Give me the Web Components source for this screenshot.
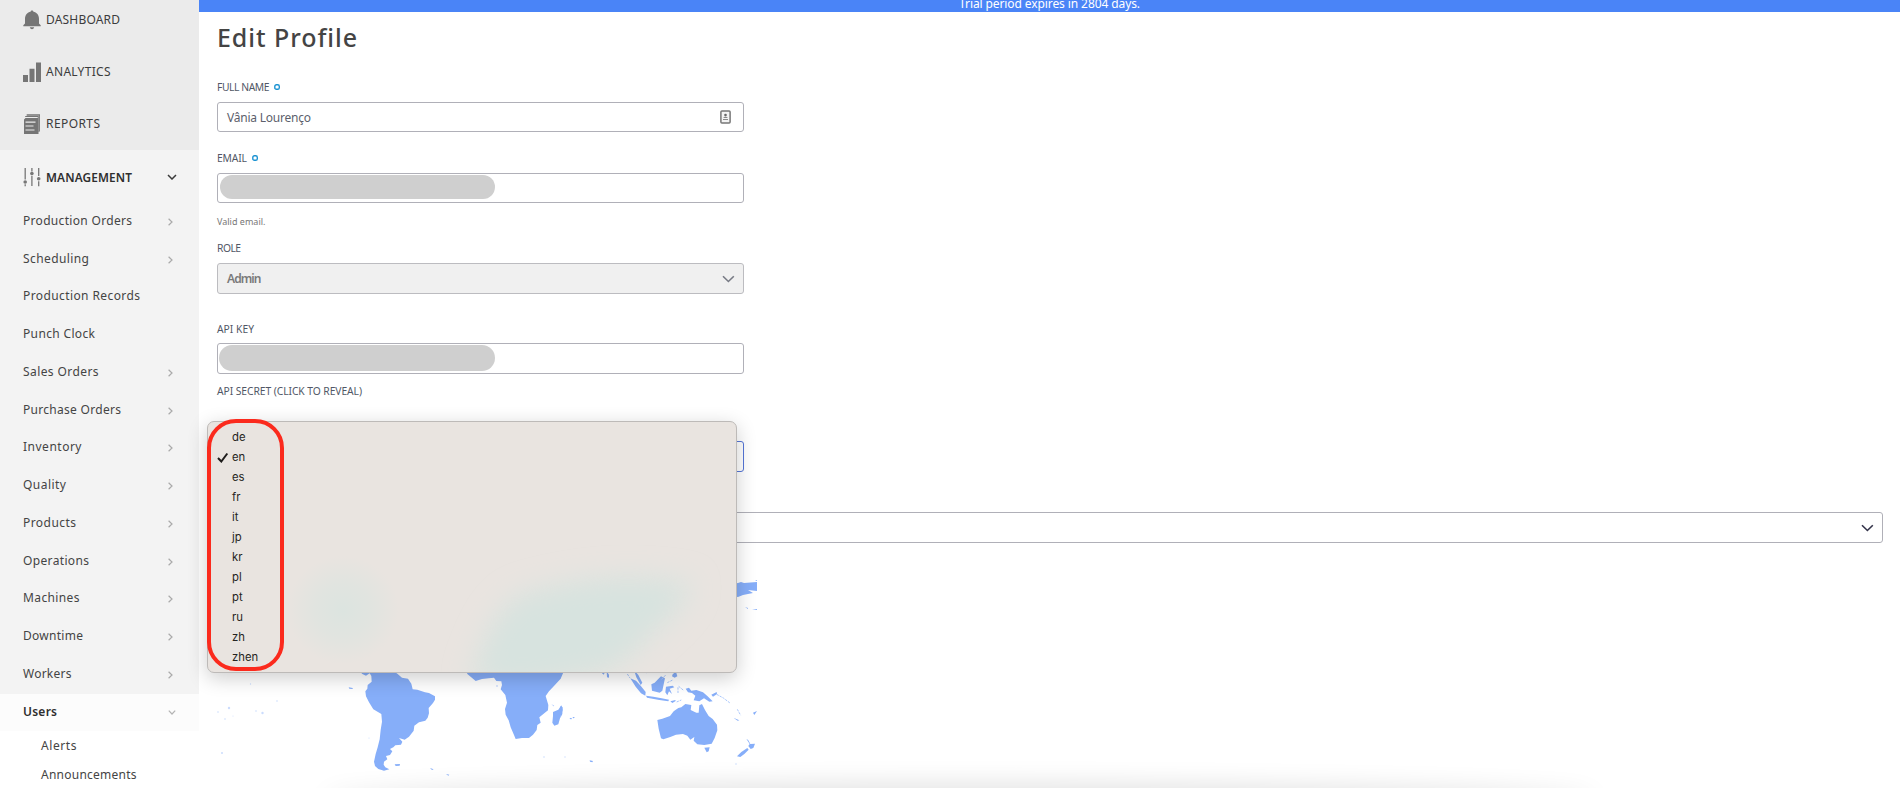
<!DOCTYPE html>
<html lang="en">
<head>
<meta charset="utf-8">
<title>Edit Profile</title>
<style>
html,body{margin:0;height:100%;overflow:hidden;background:#fff;font-family:"Noto Sans",sans-serif}
</style>
</head>
<body>
<profile-app></profile-app>
<script>
const define=(name,html,setup)=>customElements.define(name,class extends HTMLElement{
  connectedCallback(){
    if(this.shadowRoot)return;
    const t=document.createElement('template');
    t.innerHTML=typeof html==='function'?html(this):html;
    this.attachShadow({mode:'open'}).append(t.content.cloneNode(true));
    if(setup)setup(this,this.shadowRoot);
  }
});

/* Text run tracked out to a fixed measure given by its "w" attribute. */
define('ui-text',`<style>:host{display:inline-block;white-space:nowrap}span{display:inline-block}</style><span><slot></slot></span>`,(el,root)=>{
  const s=root.querySelector('span'),w=+el.getAttribute('w');
  if(!w)return;
  const n=el.textContent.length;
  s.style.letterSpacing=((w-s.getBoundingClientRect().width)/(n-1))+'px';
});

const icons={
  bell:`<svg width="18" height="20" viewBox="0 0 18 20"><path fill="#757575" d="M9 .5c.8 0 1.4.5 1.4 1.3C13.600 2.500 16 5 16 9v4.500l1.700 1.700v1H.3v-1L2 13.500V9c0-4 2.400-6.500 5.600-7.200C7.600 1 8.200.5 9 .5zM6.800 17.300h4.400c-.3 1.300-1.200 2-2.200 2s-1.900-.7-2.200-2z"/></svg>`,
  bars:`<svg width="18" height="20" viewBox="0 0 18 20"><path fill="#757575" d="M0 13h5v7H0zM6.500 6.800h5V20h-5zM13 .5h5V20h-5z"/></svg>`,
  report:`<svg width="18" height="20" viewBox="0 0 18 20"><path fill="#b0b0b0" d="M3.500 0H17v18h-1.500V2H3.500z"/><path fill="#757575" d="M4 .5h13V17h-.8V1.400H4zM2.200 2h13.500v16h-1V3H2.200zM2.500 4H15.500v16H1V5.500z"/><path stroke="#ebebeb" stroke-width="1.200" d="M2.500 8.200h10M2.500 12h8M2.500 16h9"/></svg>`,
  sliders:`<svg width="18" height="20" viewBox="0 0 18 20" stroke="#777" stroke-width="1.300" fill="#777"><path d="M2.200 1v11.500M2.200 17.200v2M8.900 1v3.500M8.900 9v10M15.700 1v8M15.700 14.200v5"/><g stroke="none"><circle cx="2.200" cy="15" r="1.800"/><circle cx="8.900" cy="6.600" r="1.800"/><circle cx="15.700" cy="11.700" r="1.800"/></g></svg>`
};
define('nav-section',el=>`<style>
:host{display:flex;height:52px;align-items:center;padding:0 22px 0 23px;font-size:12px;color:#3c3c3c}
:host([active]){font-weight:600;font-size:11.800px;color:#2e2e2e;height:53px}
.i{display:flex;width:23px}.t{flex:1;padding-bottom:2px}
:host([active]) .t{padding-bottom:0}
</style><span class="i">${icons[el.getAttribute('icon')]}</span><span class="t"><slot></slot></span>
${el.hasAttribute('active')?'<svg width="10" height="6" viewBox="0 0 10 6"><path d="M1 1l4 4 4-4" fill="none" stroke="#3a3a3a" stroke-width="1.500"/></svg>':''}`);

define('nav-item',el=>`<style>
:host{display:flex;height:37.750px;align-items:center;padding:0 26px 0 23px;font-size:12px;color:#444;justify-content:space-between}
:host([open]){background:#fcfcfc;font-weight:600;color:#2e2e2e;padding-right:23px}
.t{padding-bottom:3px}
</style><span class="t"><slot></slot></span>
${el.hasAttribute('open')?'<svg width="8" height="5" viewBox="0 0 8 5"><path d="M.8.6L4 4 7.200.6" fill="none" stroke="#b4b4b4" stroke-width="1.200"/></svg>'
:el.hasAttribute('more')?'<svg width="5" height="8" viewBox="0 0 5 8"><path d="M.6.800L4 4 .6 7.200" fill="none" stroke="#aaa" stroke-width="1.200"/></svg>':''}`);

define('nav-sub',`<style>:host{display:flex;height:29px;align-items:center;padding-left:41px;font-size:12px;color:#444;background:#fff;position:relative;top:-1px}</style><slot></slot>`);

define('side-nav',()=>{
  const items=[['Production Orders',109,1],['Scheduling',66,1],['Production Records',117],['Punch Clock',72],['Sales Orders',75.5,1],['Purchase Orders',98,1],['Inventory',58.5,1],['Quality',43,1],['Products',53,1],['Operations',66,1],['Machines',56.500,1],['Downtime',60,1],['Workers',48.500,1]];
  return `<style>
:host{display:block;width:199px;height:788px;overflow:hidden;background:#fff}
.top{background:#ebebeb;height:150px;overflow:hidden}
.top nav-section:first-child{margin-top:-6px}
.mid{background:#f3f3f3}
</style>
<div class="top"><nav-section icon="bell"><ui-text w="74">DASHBOARD</ui-text></nav-section>
<nav-section icon="bars"><ui-text w="64.500">ANALYTICS</ui-text></nav-section>
<nav-section icon="report"><ui-text w="54">REPORTS</ui-text></nav-section></div>
<div class="mid"><nav-section icon="sliders" active><ui-text w="86">MANAGEMENT</ui-text></nav-section>
${items.map(([t,w,m])=>`<nav-item${m?' more':''}><ui-text w="${w}">${t}</ui-text></nav-item>`).join('')}
<nav-item open><ui-text w="34">Users</ui-text></nav-item></div>
<nav-sub><ui-text w="35.500">Alerts</ui-text></nav-sub><nav-sub><ui-text w="95.500">Announcements</ui-text></nav-sub>`;
});

define('trial-banner',`<style>:host{display:flex;height:12px;background:#4a84f7;color:#fff;font-size:12px;justify-content:center;align-items:flex-end;overflow:hidden}
.l{line-height:18px;margin-bottom:-1px;height:18px}</style><span class="l"><slot></slot></span>`);

define('form-field',el=>`<style>
:host{display:block}
.l{display:flex;align-items:center;height:16px;line-height:16px;font-size:10.300px;color:#515766;margin-bottom:var(--gap,7px)}
.r{box-sizing:border-box;width:7px;height:7px;border:1.500px solid #1c93d2;border-radius:3px;margin-left:4px;border-width:1.500px}
</style><div class="l"><ui-text w="${el.getAttribute('w')}">${el.getAttribute('label')}</ui-text>${el.hasAttribute('required')?'<svg width="6" height="6" viewBox="0 0 6 6" style="margin-left:5px"><rect x=".8" y=".8" width="4.500" height="4.500" rx="1.600" fill="none" stroke="#1c93d2" stroke-width="1.400"/></svg>':''}</div><slot></slot>`);

const down='<svg width="13" height="8" viewBox="0 0 13 8" style="margin-right:-1px"><path d="M1 1.200l5.400 5.300 5.400-5.300" fill="none" stroke="currentColor" stroke-width="1.600"/></svg>';
define('text-box',el=>`<style>
:host{display:flex;box-sizing:border-box;width:527px;height:31px;border:1px solid #b0b0b8;border-radius:3px;align-items:center;justify-content:space-between;padding:0 9px;font-size:12px;color:#5c5f6c;background:#fff}
:host([slim]){height:30px}
:host([disabled]){background:#f0f0f0;border-color:#bcbcc0;color:#7a7a7a;font-weight:600}
:host([disabled]) svg{color:#777a84}
:host([focused]){border-color:#5676d8}
:host([wide]){width:auto;color:#33334a}
svg{flex:none}
</style><slot></slot><span></span>${el.hasAttribute('select')?down:''}${el.hasAttribute('card')?'<svg width="11" height="14" viewBox="0 0 11 14" style="margin-right:3px"><rect x=".9" y=".9" width="9.200" height="12.200" rx="1" fill="#f3f3f3" stroke="#777" stroke-width="1.500"/><circle cx="5.500" cy="5" r="1.300" fill="#666"/><path d="M3 7.900q2.500-3 5 0zM3 9h5v1H3z" fill="#888"/></svg>':''}`);

define('redacted-value',`<style>:host{display:block;width:275px;height:24px;border-radius:12px;background:#cfcfcf;margin:-2px 0 0 -7px}</style>`);

define('language-menu',()=>`<style>
:host{display:block;box-sizing:border-box;width:530px;height:252px;border:1px solid #bdbab8;border-radius:7px;background:
radial-gradient(ellipse 56px 54px at 135px 188px,#dce4e0 0,#dde4e0aa 50%,#dde4e000 100%),#e9e4e0;
box-shadow:0 5px 20px rgba(0,0,0,.2);position:relative;overflow:visible;font:11.300px/20px "Inter",sans-serif;color:#262422}
.glow{position:absolute;inset:0;width:528px;height:250px;border-radius:7px}
ul{list-style:none;margin:0;padding:5px 0 0 24px;position:relative}
li{height:20px;display:flex;align-items:center}
svg.c{position:absolute;left:9px;top:30px}
.ring{position:absolute;left:-1px;top:-3px;width:69px;height:244px;border:4px solid #fb2a1d;border-radius:29px}
</style><svg class="glow" viewBox="0 0 528 250"><defs><filter id="b" x="-30%" y="-50%" width="160%" height="200%"><feGaussianBlur stdDeviation="14"/></filter></defs><path filter="url(#b)" fill="#d7e3df" d="M262 260C275 220 288 185 315 172C370 156 425 150 485 162C475 185 458 200 440 215Q420 240 395 250L320 265z"/></svg>
<ul>${'de en es fr it jp kr pl pt ru zh zhen'.split(' ').map(t=>`<li>${t}</li>`).join('')}</ul>
<svg class="c" width="12" height="11" viewBox="0 0 12 11"><path d="M1 6l3.300 3.500L10.300 1.500" fill="none" stroke="#1e1c1b" stroke-width="2"/></svg><div class="ring"></div>`);

define('world-map',`<style>:host{display:block;height:218px}svg{display:block}</style>
<svg width="540" height="218" viewBox="217 570 540 218" fill="#86aef9">
<path d="M730 584l8-1 3-1 3 1 13-1v9l-9-1 5 3-10 2-5 2-8-1zM755 580h2v1zM737 605l2 1zM745 607l3 1v1zM752 609h5v1z"/>
<g transform="translate(330 650) scale(.33333)">
<path d="M85 60L97 72 108 77 119 70 124 78 125 95 113 105 112 116 106 124 108 139 117 157 130 178 154 192 156 215 152 240 149 268 143 292 137 312 132 335 135 348 145 357 162 362 178 358 166 352 161 344 162 335 172 328 168 318 180 315 187 304 180 297 190 292 196 286 213 284 217 275 207 264 224 269 237 260 251 242 253 227 267 217 286 212 293 203 297 190 296 174 309 159 315 149 315 139 297 129 285 127 262 119 248 118 244 101 234 86 216 83 203 72 187 60z"/>
<path d="M405 60L413 73 437 93 456 87 476 85 492 83 499 93 514 94 516 105 512 118 526 135 531 158 525 177 527 194 536 211 542 232 552 255 557 267 576 264 597 264 609 254 620 240 622 225 632 218 628 202 654 181 655 165 647 138 657 124 674 106 692 86 703 60zM694 166L698 180 692 198 685 223 673 227 667 218 669 198 669 186 685 179zM664 162l9 6-2 1zM718 207l5-4 2 5zM727 203l6-2-1 4zM56 112l12 2v3l-10-1zM194 343l16-1-1 5-12 1zM300 354l11 4-5 2zM348 372l10 2-3 3z"/>
</g>
<g transform="translate(560 650) scale(.33333)">
<path d="M292 210L296 236 303 265 310 268 331 261 348 254 369 252 382 257 391 269 403 261 401 272 412 283 433 285 455 281 464 264 472 241 471 224 458 207 446 198 435 180 426 162 418 166 416 188 409 188 392 180 394 165 376 162 364 172 355 174 341 184 330 198 307 206zM433 293l16-1-3 12-6 3zM559 266l6 5 6 11 14-1-5 13-8 3-7-9 4-6zM562 294l4 5-13 13-12 9-10-2 13-13z"/>
<path d="M211 85L228 92 242 107 257 126 256 137 243 130 227 110zM222 60L235 75 247 98 242 105 229 82zM274 103L284 98 297 85 303 79 315 85 313 94 307 122 299 128 276 122zM258 137L280 140 305 145 327 149 325 154 298 150 261 143zM318 110l20-3 5 5-14 4 7 16-9-8-5 12-6-9zM377 116l10-3 7 9 15-2 20 7 13 11 16 16-10 1-16-10-14 9-17-3 5-14-10-8-12-2zM331 154l15-4 1 3-10 6zM454 134l16-8 1 6-12 8zM338 73l10-8 4 14-8 4-8-4zM140 64l7 10v9l-6-1zM123 67h12l-4 7zM0 65h8l-8 22zM2 167l6 5-1 20-6 12zM579 188l12-5-8 12zM520 203l18 8-5 1zM30 204l6 1-3 3zM38 201h6l-3 4zM89 331l10 2-2 4-7-2zM110 350l6 2zM248 65h14l-3 5z"/>
<path fill="none" stroke="#a9c6fb" stroke-width="3" stroke-dasharray="7 3" d="M202 72l8 12M356 109l16 13M470 133l20 11 20 15M532 178l10 18M305 88l12-13M322 98l16-8M354 112v18M350 156l14-6"/>
</g>
<g fill="#cbdcfd"><circle cx="229" cy="708" r="1.200"/><circle cx="262.500" cy="713" r="1.200"/><circle cx="218" cy="712" r=".8"/><circle cx="222" cy="753" r="1"/><circle cx="250.500" cy="684" r=".7"/><circle cx="277" cy="701" r=".8"/><circle cx="225" cy="719" r=".8"/><circle cx="233" cy="716" r=".5"/><circle cx="256" cy="711" r=".8"/><circle cx="497" cy="686" r=".9"/><circle cx="369" cy="738" r=".6"/><circle cx="544" cy="757" r=".8"/><circle cx="565" cy="757" r=".7"/><circle cx="736" cy="764" r=".8"/></g>
</svg>`);

define('profile-form',`<style>
:host{display:block;padding:8px 17px 0 18px}
h1{margin:0;font-size:25px;line-height:34px;font-weight:500;color:#444;height:34px}
.name{margin-top:25px}.mail{margin-top:18px}
.hint{font-size:9px;line-height:14px;height:14px;color:#777;margin-top:12px}
.role{margin-top:11px}.key{margin-top:27px;--gap:6px}.secret{margin-top:9px;--gap:0px}
.lang{position:relative;margin-top:42px}
.lang language-menu{position:absolute;left:-10px;top:-20px}
.zone{margin-top:40px}
.key redacted-value{width:276px;height:26px;border-radius:13px;margin-left:-8px}
</style>
<h1><ui-text w="140">Edit Profile</ui-text></h1>
<form-field class="name" label="FULL NAME" w="52.500" required><text-box slim card><ui-text w="84">Vânia Lourenço</ui-text></text-box></form-field>
<form-field class="mail" label="EMAIL" w="30" required><text-box slim><redacted-value></redacted-value></text-box></form-field>
<div class="hint"><ui-text w="48.500">Valid email.</ui-text></div>
<form-field class="role" label="ROLE" w="24"><text-box select disabled><ui-text w="34.500">Admin</ui-text></text-box></form-field>
<form-field class="key" label="API KEY" w="37"><text-box><redacted-value></redacted-value></text-box></form-field>
<form-field class="secret" label="API SECRET (CLICK TO REVEAL)" w="145"></form-field>
<div class="lang"><text-box focused></text-box><language-menu></language-menu></div>
<text-box class="zone" wide select></text-box>
<world-map style="margin-top:27px"></world-map>`);

define('profile-app',`<style>
:host{display:grid;grid-template-columns:199px 1fr;height:788px;overflow:hidden;position:relative}
main{min-width:0}
.shade{position:absolute;left:330px;right:310px;bottom:-20px;height:16px;border-radius:50%;box-shadow:0 0 26px 8px rgba(0,0,0,.12);pointer-events:none}
</style><side-nav></side-nav><main><trial-banner><ui-text w="181">Trial period expires in 2804 days.</ui-text></trial-banner><profile-form></profile-form></main><div class="shade"></div>`);
</script>
</body>
</html>
